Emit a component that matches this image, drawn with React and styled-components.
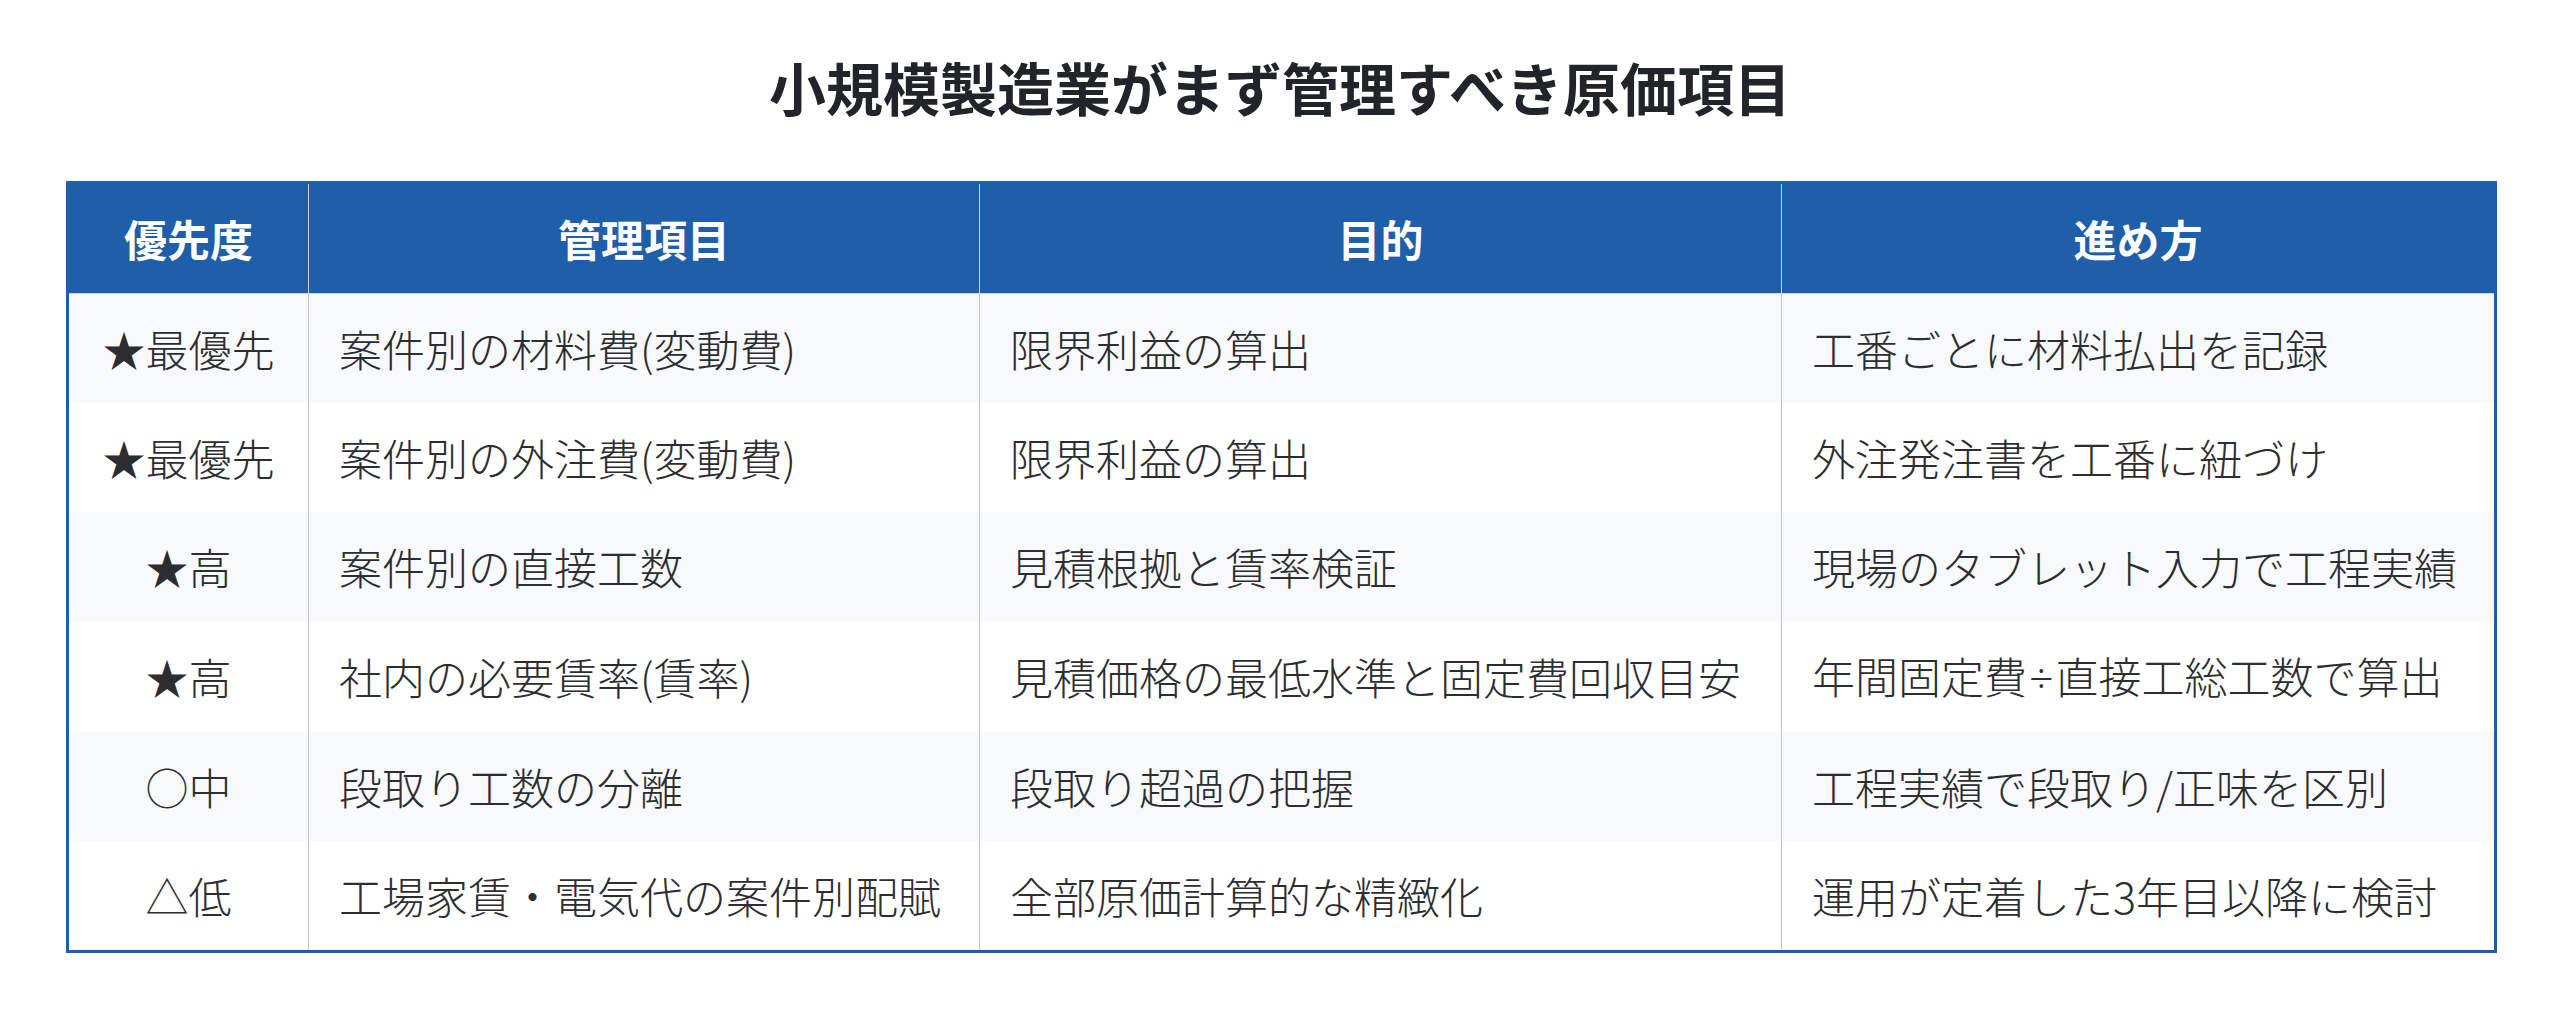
import styled, { createGlobalStyle } from "styled-components";

const GlobalStyle = createGlobalStyle`
  html, body {
    margin: 0;
    padding: 0;
    background: #fff;
  }
  body {
    font-family: "Noto Sans CJK JP", "Noto Sans", sans-serif;
    color: #2b2d30;
  }
`;

const Page = styled.div`
  padding: 47px 66px 60px;
`;

const Title = styled.h1`
  margin: 0 0 56px;
  text-align: center;
  font-size: 57px;
  line-height: 78px;
  font-weight: 700;
  color: #212529;
`;

const Table = styled.table`
  width: 100%;
  table-layout: fixed;
  border-collapse: collapse;
  border: 3px solid #1f5ea8;
  font-size: 43px;
  line-height: 65px;
`;

const HeadCell = styled.th`
  background: #1f5ea8;
  color: #fff;
  font-weight: 700;
  text-align: center;
  padding: 22px 30px;
  border: 1px solid #c9d5e6;
`;

const Row = styled.tr`
  background: ${(p) => (p.$striped ? "#f8f9fb" : "#fff")};
`;

const Cell = styled.td`
  padding: 22px 30px;
  border-left: 1px solid #c4c4c4;
  border-right: 1px solid #c4c4c4;
  text-align: ${(p) => (p.$center ? "center" : "left")};
  white-space: nowrap;
  font-weight: 300;
  color: #2b2d30;
`;

const Narrow = styled.span`
  font-family: "Noto Sans", "Liberation Sans", sans-serif;
  padding: 0 2px;
`;

const columns = [
  { label: "優先度", width: 241 },
  { label: "管理項目", width: 671 },
  { label: "目的", width: 802 },
  { label: "進め方", width: 714 },
];

const rows = [
  ["★最優先", "案件別の材料費(変動費)", "限界利益の算出", "工番ごとに材料払出を記録"],
  ["★最優先", "案件別の外注費(変動費)", "限界利益の算出", "外注発注書を工番に紐づけ"],
  ["★高", "案件別の直接工数", "見積根拠と賃率検証", "現場のタブレット入力で工程実績"],
  ["★高", "社内の必要賃率(賃率)", "見積価格の最低水準と固定費回収目安", "年間固定費÷直接工総工数で算出"],
  ["○中", "段取り工数の分離", "段取り超過の把握", "工程実績で段取り/正味を区別"],
  ["△低", "工場家賃・電気代の案件別配賦", "全部原価計算的な精緻化", "運用が定着した3年目以降に検討"],
];

// the division sign is drawn narrow, like a latin glyph
function CellText({ text }) {
  const parts = text.split("÷");
  return parts.map((part, i) => (
    <span key={i}>
      {i > 0 && <Narrow>÷</Narrow>}
      {part}
    </span>
  ));
}

export default function App() {
  return (
    <>
      <GlobalStyle />
      <Page>
        <Title>小規模製造業がまず管理すべき原価項目</Title>
        <Table>
          <colgroup>
            {columns.map((c) => (
              <col key={c.label} style={{ width: c.width }} />
            ))}
          </colgroup>
          <thead>
            <tr>
              {columns.map((c) => (
                <HeadCell key={c.label}>{c.label}</HeadCell>
              ))}
            </tr>
          </thead>
          <tbody>
            {rows.map((r, i) => (
              <Row key={i} $striped={i % 2 === 0}>
                {r.map((text, j) => (
                  <Cell key={j} $center={j === 0}>
                    <CellText text={text} />
                  </Cell>
                ))}
              </Row>
            ))}
          </tbody>
        </Table>
      </Page>
    </>
  );
}
